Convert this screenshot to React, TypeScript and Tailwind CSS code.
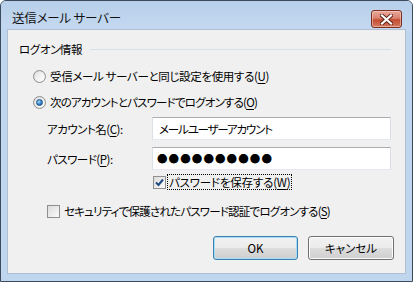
import React from "react";

const U = ({ c }: { c: string }) => (
  <>
    (<span className="underline underline-offset-[2px]">{c}</span>)
  </>
);

function Radio({ checked }: { checked?: boolean }) {
  return (
    <span className="relative flex h-[13px] w-[13px] shrink-0 items-center justify-center rounded-full border border-[#8e8f8f] bg-[linear-gradient(135deg,#d8d8d8,#fafafa)]">
      <span className="h-[9px] w-[9px] rounded-full bg-[linear-gradient(135deg,#e4e4e4,#ffffff)] flex items-center justify-center">
        {checked && (
          <span className="h-[7px] w-[7px] rounded-full border border-[#1d5281] bg-[radial-gradient(circle_at_35%_35%,#a5dcf9,#2a7ac7_60%,#1b4f8a)]" />
        )}
      </span>
    </span>
  );
}

function Check({ checked }: { checked?: boolean }) {
  return (
    <span className="flex h-[13px] w-[13px] shrink-0 items-center justify-center border border-[#8e8f8f] bg-white">
      <span className="flex h-[11px] w-[11px] items-center justify-center bg-[linear-gradient(135deg,#dcdcdc,#fbfbfb)]">
        {checked && (
          <svg width="9" height="9" viewBox="0 0 9 9">
            <path d="M1 4.5 L3.5 7 L8 1.5" fill="none" stroke="#1c4a7e" strokeWidth="2" />
          </svg>
        )}
      </span>
    </span>
  );
}

export default function App() {
  return (
    <div className="h-[282px] w-[413px] font-['Noto_Sans_CJK_JP',sans-serif] text-[11.5px] leading-[16px] text-black [font-feature-settings:'palt']">
      <div className="flex h-[282px] w-[413px] flex-col rounded-t-[6px] border border-[#3b4a5c] bg-[#c0d5ee] px-[7px] pb-[7px]">
        {/* title bar */}
        <div className="flex h-[29px] shrink-0 items-start justify-between bg-[linear-gradient(to_bottom,#b8cfe9,#c4d9f1)] -mx-[7px] px-[11px] rounded-t-[5px]">
          <div className="mt-[8px] text-[12.5px] leading-[18px] tracking-[-0.2px] text-[#111]">送信メール サーバー</div>
          <div className="mt-[9px] mr-[-1px] flex h-[18px] w-[31px] items-center justify-center rounded-[3px] border border-[#7b2f22] bg-[linear-gradient(to_bottom,#e9a99c_0%,#d98370_45%,#c34c33_55%,#d27a5e_100%)] shadow-[inset_0_0_0_1px_rgba(255,220,210,0.5)]">
            <svg width="13" height="11" viewBox="0 0 13 11">
              <path d="M2 1.5 L11 9.5 M11 1.5 L2 9.5" stroke="#5b2217" strokeWidth="4" strokeLinecap="square" />
              <path d="M2 1.5 L11 9.5 M11 1.5 L2 9.5" stroke="#ffffff" strokeWidth="2.2" strokeLinecap="square" />
            </svg>
          </div>
        </div>
        {/* client */}
        <div className="flex flex-1 flex-col bg-[#f0f0f0] border border-[#aebfd4] -mt-[1px] -mx-[1px]">
          <div className="flex flex-col pt-[11px]">
            <div className="flex h-[16px] items-center pl-[11px] pr-[14px]">
              <span className="tracking-[-0.4px]">ログオン情報</span>
              <span className="ml-[8px] h-0 flex-1 border-t border-[#d5dfe5]" />
            </div>
            <div className="mt-[9px] flex h-[20px] items-center pl-[25px]">
              <Radio />
              <span className="ml-[4px] tracking-[-0.35px]">受信メール サーバーと同じ設定を使用する<U c="U" /></span>
            </div>
            <div className="mt-[6px] flex h-[20px] items-center pl-[25px]">
              <Radio checked />
              <span className="ml-[4px] tracking-[-0.8px]">次のアカウントとパスワードでログオンする<U c="O" /></span>
            </div>
            <div className="mt-[5px] flex h-[23px] items-center pl-[39px]">
              <span className="w-[105px] tracking-[-0.5px]">アカウント名<U c="C" />:</span>
              <div className="flex h-[23px] w-[239px] items-center border border-[#abadb3] border-x-[#dbdfe6] border-b-[#e3e9ef] bg-white pl-[6px] tracking-[-1.2px]">
                メールユーザーアカウント
              </div>
            </div>
            <div className="mt-[7px] flex h-[23px] items-center pl-[39px]">
              <span className="w-[105px] tracking-[-0.5px]">パスワード<U c="P" />:</span>
              <div className="flex h-[23px] w-[239px] items-center border border-[#abadb3] border-x-[#dbdfe6] border-b-[#e3e9ef] bg-white pl-[4px] text-[10.5px] tracking-[1.1px]">
                ●●●●●●●●●●
              </div>
            </div>
            <div className="mt-[4px] flex h-[16px] items-center pl-[145px]">
              <Check checked />
              <span className="ml-[1px] border border-dotted border-black px-[1px] leading-[14px] tracking-[-0.2px]">パスワードを保存する<U c="W" /></span>
            </div>
            <div className="mt-[13px] flex h-[16px] items-center pl-[39px]">
              <Check />
              <span className="ml-[4px] tracking-[-0.8px]">セキュリティで保護されたパスワード認証でログオンする<U c="S" /></span>
            </div>
            <div className="mt-[17px] flex justify-end gap-[10px] pr-[11px]">
              <button className="flex h-[24px] w-[85px] items-center justify-center rounded-[3px] border border-[#3c7fb1] bg-[linear-gradient(to_bottom,#f2f2f2_0%,#ebebeb_50%,#dddddd_50%,#cfcfcf_100%)] shadow-[inset_0_0_0_1px_#a6dcf8]">
                OK
              </button>
              <button className="flex h-[24px] w-[86px] items-center justify-center rounded-[3px] border border-[#707070] bg-[linear-gradient(to_bottom,#f2f2f2_0%,#ebebeb_50%,#dddddd_50%,#cfcfcf_100%)] shadow-[inset_0_0_0_1px_#fcfcfc]">
                キャンセル
              </button>
            </div>
          </div>
        </div>
      </div>
    </div>
  );
}
